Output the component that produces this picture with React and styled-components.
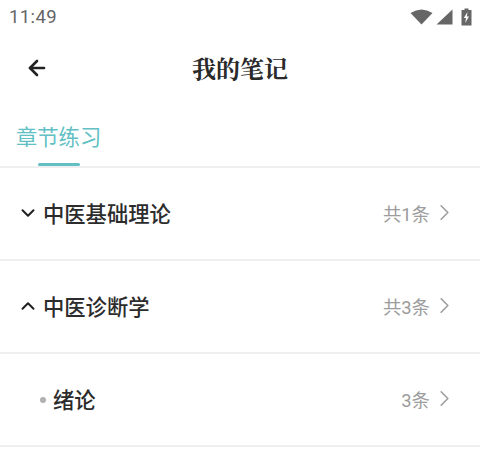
import React from "react"
import styled, { createGlobalStyle } from "styled-components"
import { ArrowLeft, ChevronDown, ChevronRight, ChevronUp } from "lucide-react"

const GlobalStyle = createGlobalStyle`
    html, body {
        margin: 0;
        padding: 0;
        background: #fff;
        overflow: hidden;
    }
    body {
        font-family: "Roboto", "Noto Sans CJK SC", sans-serif;
    }
`

const Page = styled.div`
    width: 480px;
    height: 451px;
    overflow: hidden;
    background: #fff;
    font-family: "Roboto", "Noto Sans CJK SC", sans-serif;
`

const StatusBar = styled.div`
    height: 33px;
    display: flex;
    align-items: center;
    justify-content: space-between;
    padding: 0 8px 0 9px;
    color: #666;
    font-size: 18.5px;
    letter-spacing: 0.4px;
`

const StatusIcons = styled.div`
    display: flex;
    align-items: center;
    gap: 3px;
`

const Battery = styled.svg`
    margin-left: 5px;
`

const Header = styled.div`
    height: 70px;
    position: relative;
    display: flex;
    align-items: center;
    justify-content: center;
`

const BackButton = styled.div`
    position: absolute;
    left: 25px;
    top: 23px;
    color: #222;
    display: flex;
`

const Title = styled.div`
    font-family: "Noto Serif CJK SC", "Noto Sans CJK SC", serif;
    font-weight: 700;
    font-size: 24px;
    color: #2a2a2a;
    margin-top: -1px;
`

const Tabs = styled.div`
    height: 65px;
    border-bottom: 2px solid #efefef;
    box-sizing: border-box;
    position: relative;
    padding: 18px 0 0 16px;
`

const Tab = styled.div`
    color: #62bfc4;
    font-size: 21.3px;
    line-height: 33px;
`

const Underline = styled.div`
    position: absolute;
    left: 38px;
    bottom: 0;
    width: 42px;
    height: 3px;
    border-radius: 2px;
    background: #62bfc4;
`

const Row = styled.div`
    height: 93px;
    box-sizing: border-box;
    border-bottom: 2px solid #efefef;
    display: flex;
    align-items: center;
    padding: 0 21px 0 17px;
    color: #2c2c2c;
    &:first-of-type {
        height: 92px;
    }
`

const Toggle = styled.div`
    width: 26px;
    display: flex;
    color: #222;
    margin-top: -2px;
`

const Dot = styled.div`
    width: 6px;
    height: 6px;
    border-radius: 50%;
    background: #b0b0b0;
    margin: 0 7px 0 23px;
`

const Name = styled.div`
    flex: 1;
    font-size: 21.3px;
    font-weight: 500;
    margin-top: -3px;
`

const Count = styled.div`
    font-size: 18.4px;
    color: #9c9c9c;
    margin-right: 1px;
    margin-top: -2px;
`

const Arrow = styled.div`
    display: flex;
    color: #9c9c9c;
    margin-top: -2px;
    margin-right: 1px;
`

const chapters = [
    { name: "中医基础理论", count: "共1条", icon: "down" },
    { name: "中医诊断学", count: "共3条", icon: "up" },
    { name: "绪论", count: "3条", icon: "dot" },
]

const App = () => (
    <Page>
        <GlobalStyle />
        <StatusBar>
            <span>11:49</span>
            <StatusIcons>
                <svg width="23" height="16" viewBox="0 0 23 16">
                    <path d="M0.5 4 Q11.5 -3 22.5 4 L11.5 15.5 Z" fill="#666" />
                </svg>
                <svg width="17" height="16" viewBox="0 0 17 16">
                    <path d="M16.5 0.5 V15.5 H0.5 Z" fill="#666" />
                </svg>
                <Battery width="11" height="18" viewBox="0 0 11 18">
                    <path d="M3.5 0.5 H7.5 V2 H10.5 V17.5 H0.5 V2 H3.5 Z" fill="#666" />
                    <path d="M6.5 4 L2.8 10 H5 L4.2 15 L8 8.5 H5.8 Z" fill="#fff" />
                </Battery>
            </StatusIcons>
        </StatusBar>
        <Header>
            <BackButton>
                <ArrowLeft size={24} strokeWidth={2.6} />
            </BackButton>
            <Title>我的笔记</Title>
        </Header>
        <Tabs>
            <Tab>章节练习</Tab>
            <Underline />
        </Tabs>
        {chapters.map(chapter => (
            <Row key={chapter.name}>
                {chapter.icon === "dot" ? (
                    <Dot />
                ) : (
                    <Toggle>
                        {chapter.icon === "down" ? (
                            <ChevronDown size={22} strokeWidth={2.2} />
                        ) : (
                            <ChevronUp size={22} strokeWidth={2.2} />
                        )}
                    </Toggle>
                )}
                <Name>{chapter.name}</Name>
                <Count>{chapter.count}</Count>
                <Arrow>
                    <ChevronRight size={27} strokeWidth={1.4} />
                </Arrow>
            </Row>
        ))}
    </Page>
)

export default App
